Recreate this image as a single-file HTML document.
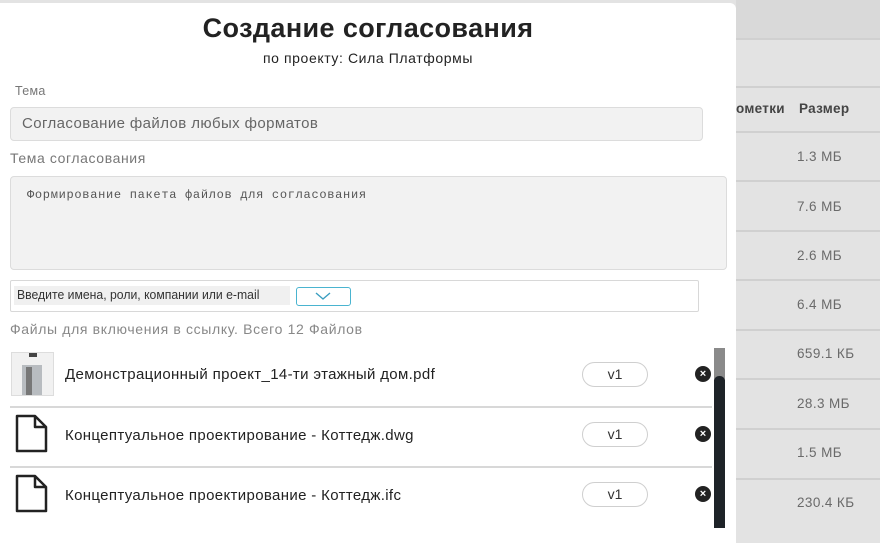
<!DOCTYPE html>
<html><head><meta charset="utf-8"><style>
*{margin:0;padding:0;box-sizing:border-box}
body{width:880px;height:528px;overflow:hidden;background:#e3e3e3;font-family:"Liberation Sans","Noto Sans CJK SC",sans-serif;position:relative}
.a{position:absolute;white-space:nowrap}
.bgline{position:absolute;left:736px;width:144px;height:2px;background:#d0d0d0}
.sz{position:absolute;left:797px;font-size:13.5px;letter-spacing:0.4px;color:#6a6a6a}
.modal{position:absolute;left:0;top:3px;width:736px;height:540px;background:#fff;border-radius:0 6px 0 0}
.pill{position:absolute;left:582px;width:66px;height:25px;border:1px solid #cfcfcf;border-radius:13px;font-size:14px;color:#333;text-align:center;line-height:23px}
.x{position:absolute;left:695px;width:16px;height:16px;border-radius:50%;background:#222;color:#fff;font-size:11px;font-weight:bold;text-align:center;line-height:16px}
.fn{position:absolute;left:65px;font-size:15px;letter-spacing:0.35px;color:#222}
.sep{position:absolute;left:10px;width:702px;height:2px;background:#d8d8d8}
</style></head><body>
<div class="a" style="left:736px;top:0;width:144px;height:38px;background:#d9d9d9"></div>
<div class="bgline" style="top:38px"></div>
<div class="bgline" style="top:86px"></div>
<div class="a" style="left:736px;top:101px;font-size:13.5px;font-weight:bold;color:#444;letter-spacing:0.3px">ометки</div>
<div class="a" style="left:799px;top:101px;font-size:13.5px;font-weight:bold;color:#444;letter-spacing:0.3px">Размер</div>
<div class="bgline" style="top:131px"></div>
<div class="bgline" style="top:180px"></div>
<div class="bgline" style="top:230px"></div>
<div class="bgline" style="top:279px"></div>
<div class="bgline" style="top:329px"></div>
<div class="bgline" style="top:378px"></div>
<div class="bgline" style="top:428px"></div>
<div class="bgline" style="top:478px"></div>
<div class="sz" style="top:149px">1.3 МБ</div>
<div class="sz" style="top:199px">7.6 МБ</div>
<div class="sz" style="top:248px">2.6 МБ</div>
<div class="sz" style="top:297px">6.4 МБ</div>
<div class="sz" style="top:346px">659.1 КБ</div>
<div class="sz" style="top:396px">28.3 МБ</div>
<div class="sz" style="top:445px">1.5 МБ</div>
<div class="sz" style="top:495px">230.4 КБ</div>

<div class="modal"></div>
<div class="a" style="left:0;width:736px;top:13px;text-align:center;font-size:27px;letter-spacing:0.4px;font-weight:bold;color:#222">Создание согласования</div>
<div class="a" style="left:0;width:736px;top:50px;text-align:center;font-size:14px;letter-spacing:0.6px;color:#222">по проекту: Сила Платформы</div>
<div class="a" style="left:15px;top:84px;font-size:12.5px;letter-spacing:0.3px;color:#777">Тема</div>
<div class="a" style="left:10px;top:107px;width:693px;height:34px;background:#f2f2f2;border:1px solid #dcdcdc;border-radius:4px"></div>
<div class="a" style="left:22px;top:115px;font-size:15px;letter-spacing:0.4px;color:#666">Согласование файлов любых форматов</div>
<div class="a" style="left:10px;top:150px;font-size:14px;letter-spacing:0.6px;color:#777">Тема согласования</div>
<div class="a" style="left:10px;top:176px;width:717px;height:94px;background:#f2f2f2;border:1px solid #dcdcdc;border-radius:4px"></div>
<div class="a" style="left:27px;top:188px;font-family:'Liberation Mono',monospace;font-size:12px;letter-spacing:0.7px;color:#555">Формирование пакета файлов для согласования</div>
<div class="a" style="left:10px;top:280px;width:689px;height:32px;background:#fff;border:1px solid #d8d8d8;border-radius:2px"></div>
<div class="a" style="left:14px;top:286px;width:276px;height:19px;background:#f0f0f0"></div>
<div class="a" style="left:17px;top:287px;font-size:13px;color:#333;transform:scaleX(0.94);transform-origin:left">Введите имена, роли, компании или e-mail</div>
<div class="a" style="left:296px;top:287px;width:55px;height:19px;border:1px solid #4ab4d0;border-radius:3px"></div>
<svg class="a" style="left:315px;top:292px" width="16" height="9"><path d="M1 1 L8 7 L15 1" stroke="#3a9ec0" stroke-width="1.4" fill="none"/></svg>
<div class="a" style="left:10px;top:321px;font-size:14px;letter-spacing:0.65px;color:#888">Файлы для включения в ссылку. Всего 12 Файлов</div>

<div class="a" style="left:11px;top:352px;width:43px;height:44px;background:#f1f1f1;border:1px solid #ddd"></div>
<div class="a" style="left:29px;top:353px;width:8px;height:4px;background:#444"></div>
<div class="a" style="left:22px;top:365px;width:20px;height:30px;background:#b8bcc0"></div>
<div class="a" style="left:26px;top:367px;width:6px;height:28px;background:#777"></div>
<div class="fn" style="top:366px">Демонстрационный проект_14-ти этажный дом.pdf</div>
<div class="pill" style="top:362px">v1</div>
<div class="x" style="top:366px">×</div>
<div class="sep" style="top:406px"></div>

<svg class="a" style="left:15px;top:414px" width="34" height="40"><path d="M2 2 H20 L31 13 V37 H2 Z M20 2 V13 H31" stroke="#222" stroke-width="2.5" fill="none" stroke-linejoin="round"/></svg>
<div class="fn" style="top:427px">Концептуальное проектирование - Коттедж.dwg</div>
<div class="pill" style="top:422px">v1</div>
<div class="x" style="top:426px">×</div>
<div class="sep" style="top:466px"></div>

<svg class="a" style="left:15px;top:474px" width="34" height="40"><path d="M2 2 H20 L31 13 V37 H2 Z M20 2 V13 H31" stroke="#222" stroke-width="2.5" fill="none" stroke-linejoin="round"/></svg>
<div class="fn" style="top:487px">Концептуальное проектирование - Коттедж.ifc</div>
<div class="pill" style="top:482px">v1</div>
<div class="x" style="top:486px">×</div>

<div class="a" style="left:714px;top:348px;width:11px;height:180px;background:#1e2328"></div>
<div class="a" style="left:714px;top:348px;width:11px;height:32px;background:#8a8a8a"></div>
<div class="a" style="left:714px;top:376px;width:11px;height:10px;background:#1e2328;border-radius:5px 5px 0 0"></div>
</body></html>
